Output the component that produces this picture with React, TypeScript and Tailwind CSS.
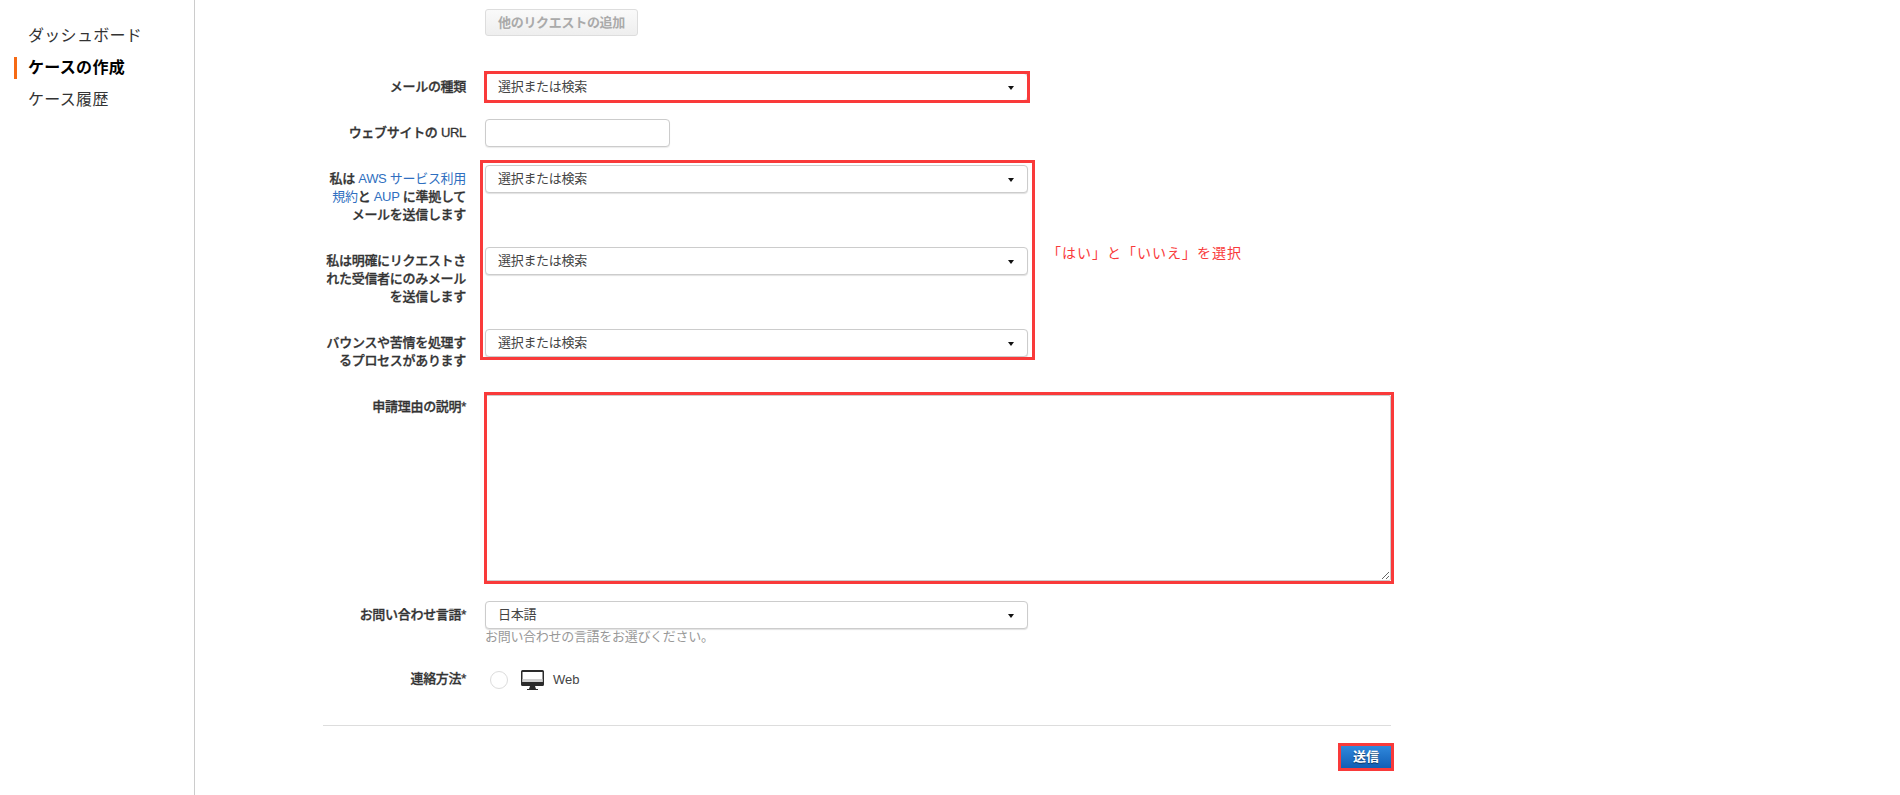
import React from "react";

const font = { fontFamily: '"Liberation Sans", "Noto Sans CJK JP", sans-serif' };

function Select({ text = "選択または検索" }: { text?: string }) {
  return (
    <div className="flex h-[28px] w-[543px] items-center justify-between rounded-[4px] border border-[#ccc] bg-white pl-[12px] pr-[12px] text-[13px] tracking-[-0.3px] text-[#444] shadow-[0_1px_1px_rgba(0,0,0,0.12)]">
      <span>{text}</span>
      <svg width="6" height="4" viewBox="0 0 6 4" className="mr-[1px] mt-[2px]">
        <path d="M0 0h6L3 4z" fill="#111" />
      </svg>
    </div>
  );
}

function Row({
  label,
  className = "",
  labelClass = "pt-[5px]",
  children,
}: {
  label: React.ReactNode;
  className?: string;
  labelClass?: string;
  children: React.ReactNode;
}) {
  return (
    <div className={`flex gap-[19px] ${className}`}>
      <div className={`w-[143px] shrink-0 text-right text-[13px] font-medium leading-[18px] tracking-[-0.3px] text-[#333] [-webkit-text-stroke:0.3px_#333] ${labelClass}`}>
        {label}
      </div>
      <div className="relative min-w-0 flex-1">{children}</div>
    </div>
  );
}

function NavItem({ text, active = false }: { text: string; active?: boolean }) {
  return (
    <div className="flex h-[32px] items-center gap-[11px]">
      <span className={`h-[22px] w-[3px] ${active ? "bg-[#f66a14]" : "bg-transparent"}`} />
      <span className={`text-[16px] tracking-[0.3px] ${active ? "font-bold text-black" : "text-[#333]"}`}>{text}</span>
    </div>
  );
}

const linkClass = "font-normal text-[#2f6fc0] [-webkit-text-stroke:0]";

export default function App() {
  return (
    <div className="flex h-[795px] w-[1900px] overflow-hidden bg-white" style={font}>
      <aside className="h-full w-[195px] shrink-0 border-r border-[#ccc] pl-[14px] pt-[20px]">
        <NavItem text="ダッシュボード" />
        <NavItem text="ケースの作成" active />
        <NavItem text="ケース履歴" />
      </aside>
      <main className="ml-[128px] w-[1068px] pt-[9px]">
        <div className="ml-[162px]">
          <button className="h-[27px] w-[153px] rounded-[3px] border border-[#ddd] bg-gradient-to-b from-[#fafafa] to-[#eee] text-[13px] font-bold tracking-[-0.3px] text-[#aaa]">
            他のリクエストの追加
          </button>
        </div>

        <Row label="メールの種類" className="mt-[37px]">
          <Select />
          <div className="pointer-events-none absolute left-[-1px] top-[-2px] h-[32px] w-[546px] border-[3px] border-[#f93a3a]" />
        </Row>

        <Row label="ウェブサイトの URL" className="mt-[18px]">
          <div className="h-[28px] w-[185px] rounded-[4px] border border-[#ccc] bg-white shadow-[0_1px_1px_rgba(0,0,0,0.08)]" />
        </Row>

        <div className="relative mt-[18px]">
          <Row
            className="h-[82px]"
            label={
              <>
                私は <span className={linkClass}>AWS サービス利用</span>
                <br />
                <span className={linkClass}>規約</span>と{" "}
                <span className={linkClass}>AUP</span> に準拠して
                <br />
                メールを送信します
              </>
            }
          >
            <Select />
          </Row>
          <Row
            className="h-[82px]"
            label={
              <>
                私は明確にリクエストさ
                <br />
                れた受信者にのみメール
                <br />
                を送信します
              </>
            }
          >
            <Select />
          </Row>
          <Row
            className="h-[28px]"
            label={
              <>
                バウンスや苦情を処理す
                <br />
                るプロセスがあります
              </>
            }
          >
            <Select />
          </Row>
          <div className="pointer-events-none absolute left-[157px] top-[-5px] h-[200px] w-[555px] border-[3px] border-[#f93a3a]">
            <span className="absolute left-[564px] top-[80px] whitespace-nowrap text-[14px] leading-[20px] tracking-[1px] text-[#f93a3a]">
              「はい」と「いいえ」を選択
            </span>
          </div>
        </div>

        <Row label="申請理由の説明*" className="mt-[38px]" labelClass="pt-[3px]">
          <textarea className="block h-[186px] w-full rounded-[2px] border border-[#ccc] bg-white outline-none" />
          <div className="pointer-events-none absolute bottom-[-3px] left-[-1px] right-[-3px] top-[-3px] border-[3px] border-[#f93a3a]" />
        </Row>

        <Row label="お問い合わせ言語*" className="mt-[20px]">
          <Select text="日本語" />
          <p className="-mt-px text-[13px] leading-[18px] tracking-[-0.3px] text-[#999]">お問い合わせの言語をお選びください。</p>
        </Row>

        <Row label="連絡方法*" className="mt-[24px]" labelClass="pt-0">
          <div className="flex items-center">
            <span className="ml-[5px] h-[18px] w-[18px] rounded-full border-[1.5px] border-[#dcdcdc] bg-white" />
            <svg width="23" height="20" viewBox="0 0 23 20" className="ml-[13px]">
              <path d="M1.5 0h20A1.5 1.5 0 0 1 23 1.5v13a1.5 1.5 0 0 1-1.5 1.5h-20A1.5 1.5 0 0 1 0 14.5v-13A1.5 1.5 0 0 1 1.5 0z" fill="#2b2b2b" />
              <rect x="1.5" y="2" width="20" height="10" fill="#fff" />
              <rect x="1.5" y="9" width="20" height="3" fill="#d0d0d0" />
              <path d="M9 16h5l1 3h2v1H6v-1h2z" fill="#2b2b2b" />
            </svg>
            <span className="ml-[9px] -mt-px text-[13px] text-[#444]">Web</span>
          </div>
        </Row>

        <div className="mt-[35px] border-t border-[#ddd]" />

        <div className="mt-[20px] flex justify-end">
          <div className="relative">
            <button className="block h-[22px] w-[50px] bg-gradient-to-b from-[#2f88dc] to-[#115fb6] text-[13px] font-bold text-white [text-shadow:0_1px_1px_rgba(0,0,0,0.5)]">
              送信
            </button>
            <div className="pointer-events-none absolute -inset-[3px] border-[3px] border-[#f93a3a]" />
          </div>
        </div>
      </main>
    </div>
  );
}
